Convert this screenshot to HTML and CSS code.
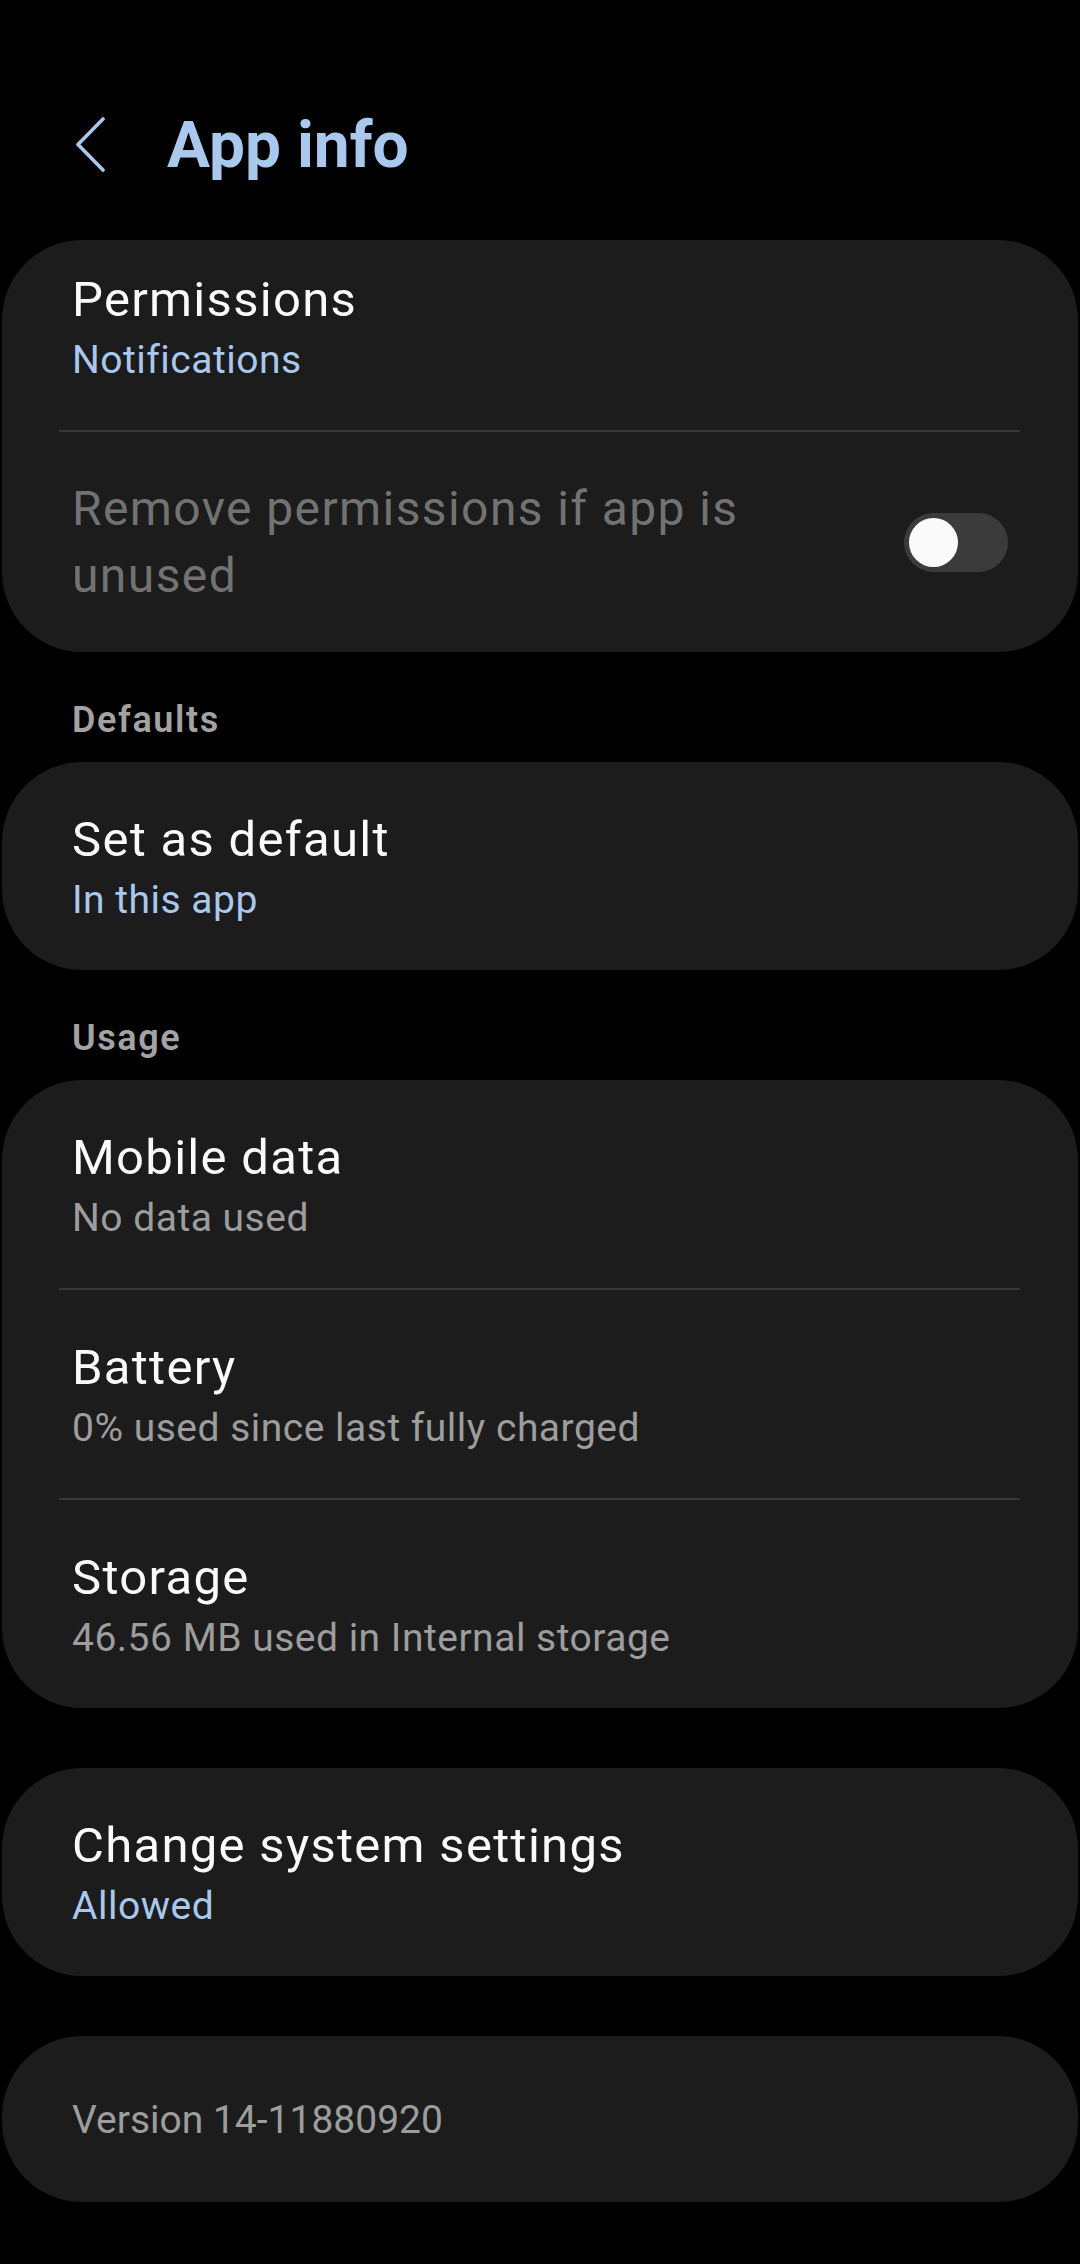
FILE: index.html
```html
<!DOCTYPE html>
<html lang="en">

<head>
    <meta charset="UTF-8">
    <meta name="viewport" content="width=device-width, initial-scale=1.0">
    <title>App info</title>
    <link rel="stylesheet" href="styles.css">
</head>

<body>
    <div class="app-info">
        <!-- Header -->
        <div class="header">
            <svg class="back" width="34" height="56" viewBox="0 0 34 56">
                <polyline points="29,3 4,28.5 29,54" fill="none" stroke="#a9c8ee" stroke-width="3.6" stroke-linecap="round" stroke-linejoin="round"/>
            </svg>
            <h1>App info</h1>
        </div>

        <!-- Permissions -->
        <div class="card">
            <div class="row first">
                <div class="title">Permissions</div>
                <div class="sub blue">Notifications</div>
            </div>
            <div class="divider"></div>
            <div class="row switch-row">
                <div class="switch-text">Remove permissions if app is unused</div>
                <div class="switch"><span class="knob"></span></div>
            </div>
        </div>

        <div class="section-label">Defaults</div>
        <div class="card">
            <div class="row">
                <div class="title">Set as default</div>
                <div class="sub blue">In this app</div>
            </div>
        </div>

        <div class="section-label">Usage</div>
        <div class="card">
            <div class="row">
                <div class="title">Mobile data</div>
                <div class="sub">No data used</div>
            </div>
            <div class="divider"></div>
            <div class="row">
                <div class="title">Battery</div>
                <div class="sub">0% used since last fully charged</div>
            </div>
            <div class="divider"></div>
            <div class="row">
                <div class="title">Storage</div>
                <div class="sub">46.56 MB used in Internal storage</div>
            </div>
        </div>

        <div class="card spaced">
            <div class="row">
                <div class="title">Change system settings</div>
                <div class="sub blue">Allowed</div>
            </div>
        </div>

        <div class="card spaced">
            <div class="version">Version 14-11880920</div>
        </div>
    </div>
</body>

</html>
```

FILE: styles.css
```css
body {
    margin: 0;
    padding: 0;
    background-color: #000;
    font-family: Roboto, 'Noto Sans', sans-serif;
    color: #fafafa;
}

.app-info {
    width: 1080px;
    padding-bottom: 60px;
}

.header {
    display: flex;
    align-items: center;
    height: 80px;
    padding: 106px 0 54px 74px;
}

.header .back {
    margin-top: -5px;
}

.header h1 {
    margin: 0 0 0 59px;
    font-size: 64px;
    line-height: 80px;
    font-weight: 700;
    color: #a9c8ee;
}

.card {
    margin: 0 2px;
    background-color: #1c1c1c;
    border-radius: 80px;
}

.card.spaced {
    margin-top: 60px;
}

.row {
    padding: 49px 70px 46px 70px;
}

.row.first {
    padding-top: 31px;
}

.title {
    font-size: 49px;
    line-height: 58px;
    letter-spacing: 1.3px;
}

.sub {
    margin-top: 7px;
    font-size: 39px;
    line-height: 48px;
    letter-spacing: 0.5px;
    color: #9d9d9d;
}

.sub.blue {
    color: #a9c8ee;
}

.divider {
    height: 2px;
    margin: 0 58px 0 57px;
    background-color: #383838;
}

.switch-row {
    display: flex;
    align-items: center;
    justify-content: space-between;
    padding-top: 43px;
    padding-bottom: 43px;
    padding-right: 70px;
}

.switch-text {
    width: 720px;
    font-size: 48px;
    line-height: 67px;
    letter-spacing: 1.4px;
    color: #727272;
}

.switch {
    width: 104px;
    height: 59px;
    border-radius: 30px;
    background-color: #3b3b3b;
    display: flex;
    align-items: center;
    padding-left: 5px;
    box-sizing: border-box;
}

.knob {
    width: 49px;
    height: 49px;
    border-radius: 50%;
    background-color: #fafafa;
}

.section-label {
    margin: 46px 0 20px 72px;
    font-size: 36px;
    line-height: 44px;
    font-weight: 600;
    letter-spacing: 1.6px;
    color: #a3a3a3;
}

.version {
    padding: 60px 70px 58px 70px;
    font-size: 39px;
    line-height: 48px;
    color: #9d9d9d;
}
```
